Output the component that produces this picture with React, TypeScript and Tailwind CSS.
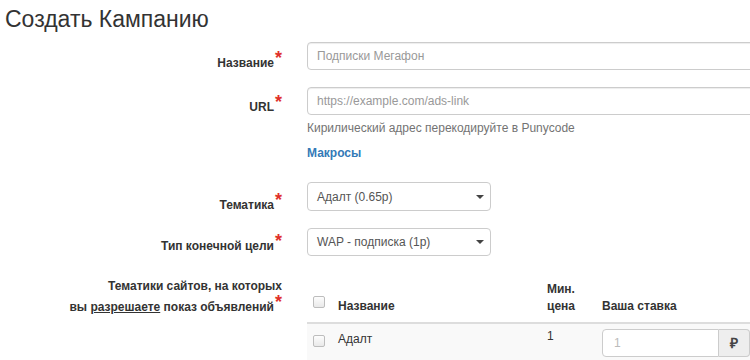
import React from 'react'

function Req() {
  return <span className="relative -top-[3px] ml-[1px] text-[18px] leading-[0] font-bold text-[#e0302a]">*</span>
}

function Checkbox() {
  return (
    <span className="inline-block h-[12px] w-[12px] rounded-[2px] border border-[#bdbdbd] bg-gradient-to-b from-[#fdfdfd] to-[#e9e9e9]" />
  )
}

function Caret() {
  return <span className="inline-block h-0 w-0 border-x-[4px] border-t-[4px] border-x-transparent border-t-[#444]" />
}

export default function App() {
  return (
    <div className="h-[360px] w-[750px] overflow-hidden bg-white font-['Liberation_Sans',Arial,sans-serif] text-[#333]">
      <h1 className="pl-[5px] pt-[8px] text-[23px] leading-none font-normal text-[#333]">Создать Кампанию</h1>

      <div className="mt-[11px] grid h-[28px] grid-cols-[282px_1fr] gap-x-[25px]">
        <label className="pt-[13px] text-right text-[12px] leading-[16px] font-bold">
          Название<Req />
        </label>
        <div className="flex h-[28px] w-[450px] items-center rounded-[4px] border border-[#ccc] bg-white px-[9px] text-[12px] text-[#999] shadow-[inset_0_1px_1px_rgba(0,0,0,0.075)]">
          Подписки Мегафон
        </div>
      </div>

      <div className="mt-[17px] grid grid-cols-[282px_1fr] gap-x-[25px]">
        <label className="pt-[12px] text-right text-[12px] leading-[16px] font-bold">
          URL<Req />
        </label>
        <div className="flex flex-col">
          <div className="flex h-[28px] w-[450px] items-center rounded-[4px] border border-[#ccc] bg-white px-[9px] text-[12px] text-[#999] shadow-[inset_0_1px_1px_rgba(0,0,0,0.075)]">
            https://example.com/ads-link
          </div>
          <p className="mt-[5px] text-[12px] leading-[16px] text-[#737373]">Кирилический адрес перекодируйте в Punycode</p>
          <a className="mt-[9px] text-[12px] leading-[16px] font-bold text-[#337ab7]">Макросы</a>
        </div>
      </div>

      <div className="mt-[21px] grid h-[29px] grid-cols-[282px_1fr] gap-x-[25px]">
        <label className="pt-[15px] text-right text-[12px] leading-[16px] font-bold">
          Тематика<Req />
        </label>
        <div className="flex h-[29px] w-[184px] items-center justify-between rounded-[4px] border border-[#ccc] bg-white pl-[9px] pr-[6px] text-[12px] text-[#555]">
          <span>Адалт (0.65р)</span>
          <Caret />
        </div>
      </div>

      <div className="mt-[17px] grid h-[28px] grid-cols-[282px_1fr] gap-x-[25px]">
        <label className="pt-[10px] text-right text-[12px] leading-[16px] font-bold">
          Тип конечной цели<Req />
        </label>
        <div className="flex h-[28px] w-[184px] items-center justify-between rounded-[4px] border border-[#ccc] bg-white pl-[9px] pr-[6px] text-[12px] text-[#555]">
          <span>WAP - подписка (1р)</span>
          <Caret />
        </div>
      </div>

      <div className="mt-[20px] grid grid-cols-[282px_1fr] gap-x-[25px]">
        <label className="text-right text-[12px] leading-[21px] font-bold">
          Тематики сайтов, на которых
          <br />
          вы <span className="underline">разрешаете</span> показ объявлений<Req />
        </label>
        <div className="w-[460px] text-[12px] leading-[17px]">
          <div className="grid grid-cols-[23px_209px_55px_1fr] items-end border-b-2 border-[#ddd] font-bold">
            <div className="pb-[9px] pl-[6px]"><Checkbox /></div>
            <div className="px-[8px] pb-[7px]">Название</div>
            <div className="px-[8px] pt-[5px] pb-[7px]">Мин.<br />цена</div>
            <div className="px-[8px] pb-[7px]">Ваша ставка</div>
          </div>
          <div className="grid grid-cols-[23px_209px_55px_1fr] items-start bg-[#f9f9f9]">
            <div className="pt-[11px] pl-[6px]"><Checkbox /></div>
            <div className="px-[8px] pt-[7px]">Адалт</div>
            <div className="px-[8px] pt-[4px]">1</div>
            <div className="px-[8px] pt-[5px] pb-[6px]">
              <div className="flex h-[28px] w-[148px]">
                <div className="flex flex-1 items-center rounded-l-[4px] border border-[#ccc] bg-white px-[11px] text-[#bbb]">1</div>
                <div className="flex w-[31px] items-center justify-center rounded-r-[4px] border border-l-0 border-[#ccc] bg-[#eee] text-[14px] font-bold text-[#444]">₽</div>
              </div>
            </div>
          </div>
        </div>
      </div>
    </div>
  )
}
